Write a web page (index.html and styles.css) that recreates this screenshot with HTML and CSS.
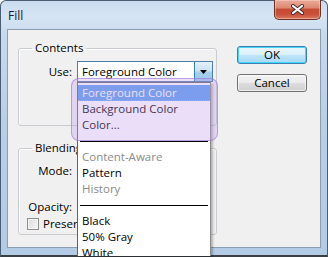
FILE: index.html
```html
<!DOCTYPE html>
<html lang="en">
<head>
    <meta charset="UTF-8">
    <meta name="viewport" content="width=device-width, initial-scale=1.0">
    <title>Fill</title>
    <link rel="stylesheet" href="styles.css">
</head>
<body>
    <div class="window">
        <div class="titlebar">
            <span class="title">Fill</span>
            <button class="close" aria-label="Close">
                <svg width="13" height="11" viewBox="0 0 13 11">
                    <path d="M2 2 L11 9 M2 9 L11 2" stroke="#3b2a2a" stroke-width="4" stroke-linecap="round"/>
                    <path d="M2 2 L11 9 M2 9 L11 2" stroke="#ffffff" stroke-width="2.2" stroke-linecap="round"/>
                </svg>
            </button>
        </div>

        <div class="client">
            <div class="groups">
                <fieldset class="group group-contents">
                    <legend>Contents</legend>
                    <div class="row row-use">
                        <label class="row-label">Use:</label>
                        <div class="select select-open">
                            <span class="select-value">Foreground Color</span>
                            <span class="select-arrow">
                                <svg width="7" height="4" viewBox="0 0 7 4"><path d="M0 0 H7 L3.5 4 Z" fill="#000"/></svg>
                            </span>
                        </div>
                    </div>
                </fieldset>

                <fieldset class="group group-blending">
                    <legend>Blending</legend>
                    <div class="row row-mode">
                        <label class="row-label">Mode:</label>
                        <div class="select select-small"></div>
                    </div>
                    <div class="row row-opacity">
                        <label class="row-label">Opacity:</label>
                        <div class="field"></div>
                    </div>
                    <div class="check-row">
                        <span class="checkbox"></span>
                        <span class="check-label">Preserve Transparency</span>
                    </div>
                </fieldset>
            </div>

            <div class="actions">
                <button class="btn btn-default">OK</button>
                <button class="btn">Cancel</button>
            </div>
        </div>

        <ul class="dropdown">
            <li class="item item-selected">Foreground Color</li>
            <li class="item">Background Color</li>
            <li class="item">Color...</li>
            <li class="separator"></li>
            <li class="item item-disabled">Content-Aware</li>
            <li class="item">Pattern</li>
            <li class="item item-disabled">History</li>
            <li class="separator"></li>
            <li class="item">Black</li>
            <li class="item">50% Gray</li>
            <li class="item">White</li>
        </ul>

        <div class="callout"></div>
    </div>
</body>
</html>
```

FILE: styles.css
```css
* {
    margin: 0;
    padding: 0;
    box-sizing: border-box;
}

html, body {
    height: 257px;
    overflow: hidden;
}

body {
    font-family: "Open Sans", "DejaVu Sans", sans-serif;
    font-size: 11.5px;
    color: #000;
    background-color: #ffffff;
}

.window {
    position: relative;
    width: 328px;
    height: 257px;
    border: 1px solid #4a5d72;
    border-bottom: 2px solid #3a3f46;
    border-radius: 6px 6px 0 0;
    background: linear-gradient(180deg, #cadcef 0, #d6e5f4 16px, #c6daee 34px, #b8cfe8 120px, #b3cbe5 100%);
}

.titlebar {
    display: flex;
    align-items: flex-start;
    height: 28px;
    padding-left: 7px;
}

.title {
    font-size: 12px;
    line-height: 14px;
    margin-top: 8px;
    color: #1b1b2a;
}

.close {
    display: flex;
    align-items: center;
    justify-content: center;
    margin-left: auto;
    margin-right: 6px;
    margin-top: -1px;
    width: 47px;
    height: 20px;
    border: 1px solid #6b3328;
    border-top: none;
    border-radius: 0 0 5px 5px;
    background: linear-gradient(180deg, #e9ab9b 0, #dd8a74 40%, #c64b33 50%, #c9503a 75%, #dc7a5e 100%);
    box-shadow: inset 0 0 0 1px rgba(255, 220, 210, 0.45);
}

.client {
    display: flex;
    height: 219px;
    margin: 0 6px 0 6px;
    border: 1px solid #8d9db0;
    background-color: #f0f0f0;
    padding-left: 10px;
}

.groups {
    width: 199px;
}

.group {
    margin: 0;
    min-width: 0;
    border: 1px solid #c8ccd0;
    border-radius: 3px;
    padding: 0;
    box-shadow: inset 1px 1px 0 #ffffff;
}

.group legend {
    margin-left: 13px;
    padding: 0 3px;
    line-height: 16px;
}

.group-contents {
    margin-top: 10px;
    padding-bottom: 43px;
}

.group-blending {
    margin-top: 14px;
    padding-bottom: 4px;
}

.row {
    display: flex;
    align-items: center;
    height: 21px;
}

.row-label {
    width: 53px;
    margin-right: 5px;
    text-align: right;
}

.row-use {
    margin-top: 5px;
}

.row-mode {
    margin-top: 4px;
}

.row-opacity {
    margin-top: 15px;
}

.select {
    position: relative;
    display: flex;
    align-items: center;
    width: 136px;
    height: 21px;
    border: 1px solid #7a9cbc;
    background-color: #fff;
}

.select-open {
    border-color: #4f7ea8;
}

.select-small {
    width: 118px;
    border-color: #a8a8a8;
}

.select-value {
    padding-left: 4px;
    line-height: 19px;
}

.select-arrow {
    display: flex;
    align-items: center;
    justify-content: center;
    margin-left: auto;
    width: 18px;
    height: 19px;
    border-left: 1px solid #3c7fb1;
    background: linear-gradient(180deg, #e3f1fb 0, #c9e3f6 48%, #a7cfee 52%, #9cc7ea 100%);
}

.field {
    width: 50px;
    height: 21px;
    border: 1px solid #a8a8a8;
    background-color: #fff;
}

.check-row {
    display: flex;
    align-items: center;
    gap: 4px;
    width: 50px;
    height: 13px;
    margin-left: 8px;
    white-space: nowrap;
    overflow: hidden;
}

.checkbox {
    flex: none;
    width: 12px;
    height: 12px;
    border: 1px solid #8e8f8f;
    background: linear-gradient(135deg, #dcdcdc 0, #f6f6f6 100%);
    box-shadow: inset 0 0 0 1px #f4f4f4;
}

.actions {
    display: flex;
    flex-direction: column;
    gap: 10px;
    margin-left: 20px;
    margin-top: 16px;
}

.btn {
    width: 70px;
    height: 18px;
    font-family: inherit;
    font-size: 11.5px;
    line-height: 16px;
    color: #000;
    border: 1px solid #707070;
    border-radius: 3px;
    background: linear-gradient(180deg, #f2f2f2 0, #ebebeb 50%, #dddddd 51%, #cfcfcf 100%);
    box-shadow: inset 0 0 0 1px rgba(255, 255, 255, 0.7);
}

.btn-default {
    border-color: #3c7fb1;
    background: linear-gradient(180deg, #eaf6fd 0, #d9f0fc 50%, #bee6fd 51%, #a7d9f5 100%);
    box-shadow: inset 0 0 0 1px #48d5fb;
}

.dropdown {
    position: absolute;
    left: 76px;
    top: 81px;
    width: 134px;
    height: 174px;
    overflow: hidden;
    list-style: none;
    padding-top: 2px;
    background-color: #fff;
    border: 1px solid #646464;
    border-right-color: #8a8a8a;
    border-bottom: none;
    box-shadow: 2px 2px 2px rgba(0, 0, 0, 0.25);
}

.item {
    height: 16px;
    line-height: 16px;
    padding-left: 4px;
    white-space: nowrap;
}

.item-selected {
    background-color: #5b9ef0;
    color: #ffffff;
    border-bottom: 1px dotted #e2a15d;
}

.item-disabled {
    color: #8a8a8a;
}

.separator {
    height: 16px;
    padding: 0 2px;
    display: flex;
    align-items: center;
}

.separator::before {
    content: "";
    flex: 1;
    height: 1px;
    background-color: #000;
}

.callout {
    position: absolute;
    left: 70px;
    top: 77px;
    width: 147px;
    height: 63px;
    border: 1px solid rgba(150, 110, 215, 0.55);
    border-radius: 8px;
    background-color: rgba(190, 155, 235, 0.33);
}
```
